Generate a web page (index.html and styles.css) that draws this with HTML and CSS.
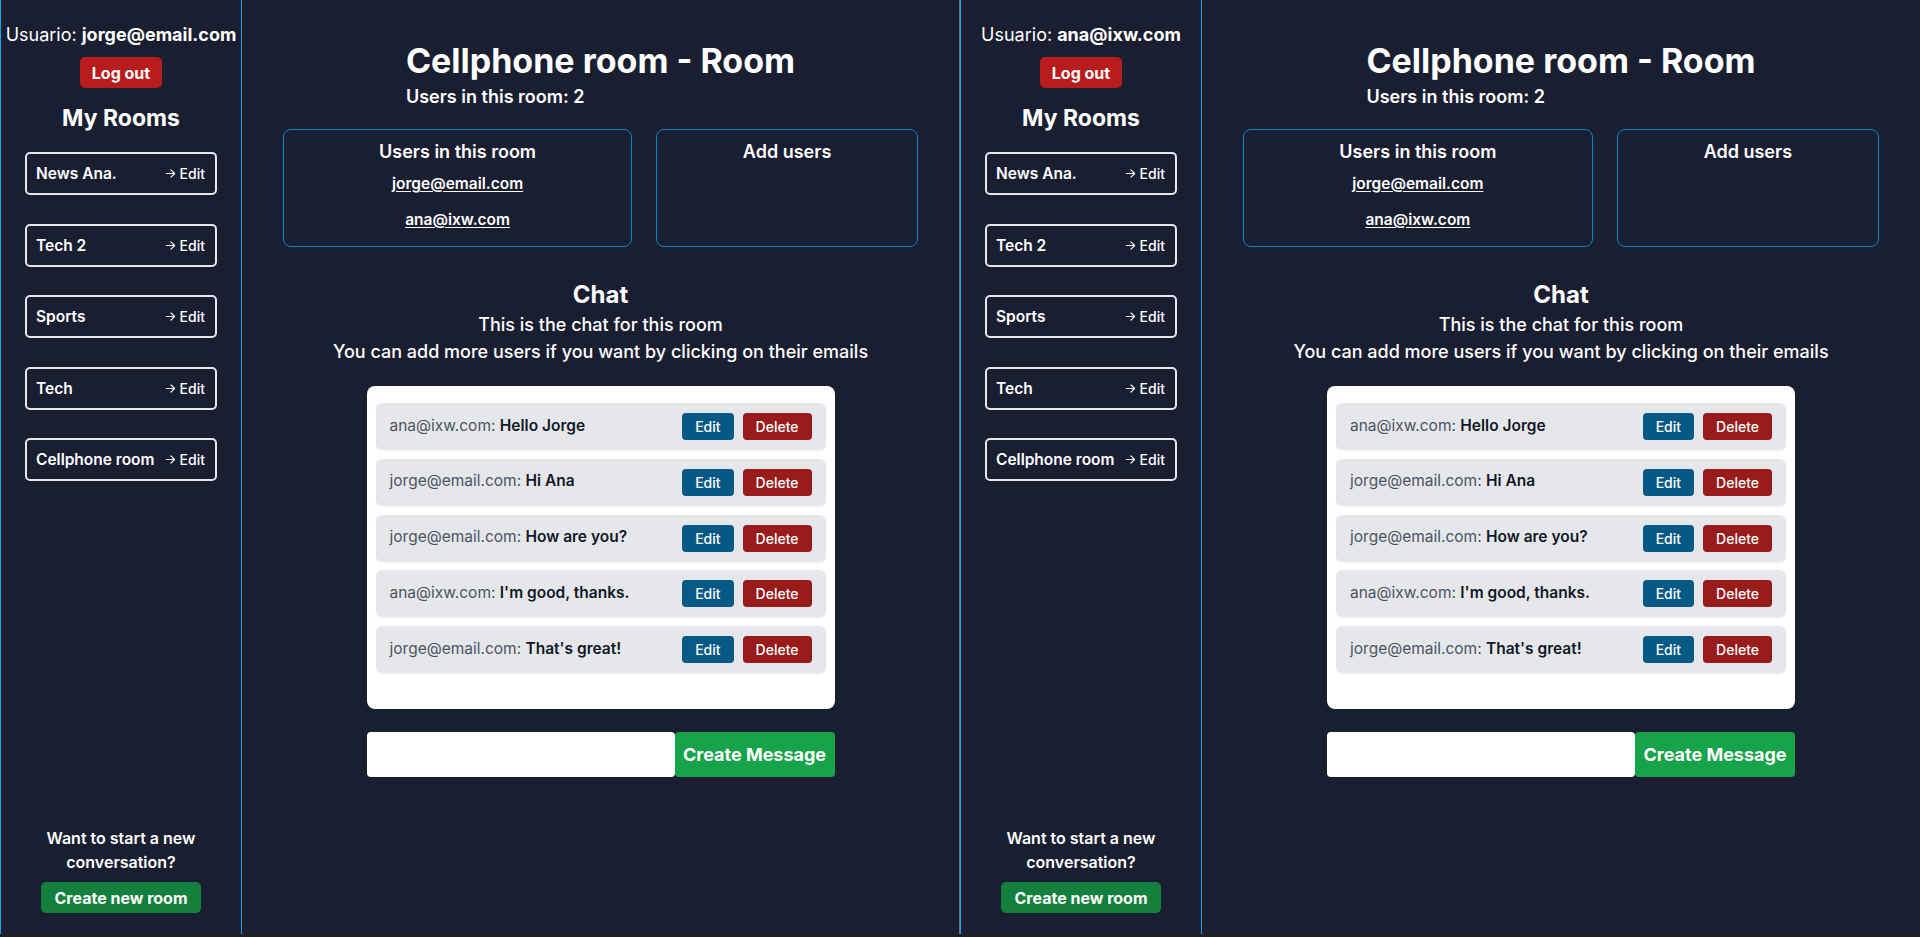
FILE: index.html
```html
<!DOCTYPE html>
<html lang="en">
<head>
<meta charset="utf-8">
<title>Cellphone room - Room</title>
<link rel="stylesheet" href="styles.css">
</head>
<body>
<div class="screen">
  <div class="window window-left">
    <aside class="sidebar">
      <div class="user-line">Usuario: <strong>jorge@email.com</strong></div>
      <button class="btn btn-logout">Log out</button>
      <h2 class="rooms-title">My Rooms</h2>
      <ul class="room-list">
        <li class="room-card"><span class="room-name">News Ana.</span><span class="room-edit"><svg class="arrow" viewBox="0 0 12 12" width="11" height="11"><path d="M1.5 6h9M6.5 2l4 4-4 4" fill="none" stroke="currentColor" stroke-width="1.3" stroke-linecap="round" stroke-linejoin="round"/></svg>Edit</span></li>
        <li class="room-card"><span class="room-name">Tech 2</span><span class="room-edit"><svg class="arrow" viewBox="0 0 12 12" width="11" height="11"><path d="M1.5 6h9M6.5 2l4 4-4 4" fill="none" stroke="currentColor" stroke-width="1.3" stroke-linecap="round" stroke-linejoin="round"/></svg>Edit</span></li>
        <li class="room-card"><span class="room-name">Sports</span><span class="room-edit"><svg class="arrow" viewBox="0 0 12 12" width="11" height="11"><path d="M1.5 6h9M6.5 2l4 4-4 4" fill="none" stroke="currentColor" stroke-width="1.3" stroke-linecap="round" stroke-linejoin="round"/></svg>Edit</span></li>
        <li class="room-card"><span class="room-name">Tech</span><span class="room-edit"><svg class="arrow" viewBox="0 0 12 12" width="11" height="11"><path d="M1.5 6h9M6.5 2l4 4-4 4" fill="none" stroke="currentColor" stroke-width="1.3" stroke-linecap="round" stroke-linejoin="round"/></svg>Edit</span></li>
        <li class="room-card"><span class="room-name">Cellphone room</span><span class="room-edit"><svg class="arrow" viewBox="0 0 12 12" width="11" height="11"><path d="M1.5 6h9M6.5 2l4 4-4 4" fill="none" stroke="currentColor" stroke-width="1.3" stroke-linecap="round" stroke-linejoin="round"/></svg>Edit</span></li>
      </ul>
      <div class="new-room">
        <p>Want to start a new conversation?</p>
        <button class="btn btn-create-room">Create new room</button>
      </div>
    </aside>
    <main class="room-main">
      <header class="room-header">
        <div class="room-header-inner">
          <h1>Cellphone room - Room</h1>
          <p>Users in this room: 2</p>
        </div>
      </header>
      <section class="user-panels">
        <div class="panel">
          <h3>Users in this room</h3>
          <a class="user-link" href="#">jorge@email.com</a>
          <a class="user-link" href="#">ana@ixw.com</a>
        </div>
        <div class="panel">
          <h3>Add users</h3>
        </div>
      </section>
      <section class="chat-intro">
        <h2>Chat</h2>
        <p>This is the chat for this room</p>
        <p>You can add more users if you want by clicking on their emails</p>
      </section>
      <div class="chat-box">
        <div class="msg"><p><span class="author">ana@ixw.com:</span> <b>Hello Jorge</b></p><div class="msg-actions"><button class="btn btn-edit">Edit</button><button class="btn btn-delete">Delete</button></div></div>
        <div class="msg"><p><span class="author">jorge@email.com:</span> <b>Hi Ana</b></p><div class="msg-actions"><button class="btn btn-edit">Edit</button><button class="btn btn-delete">Delete</button></div></div>
        <div class="msg"><p><span class="author">jorge@email.com:</span> <b>How are you?</b></p><div class="msg-actions"><button class="btn btn-edit">Edit</button><button class="btn btn-delete">Delete</button></div></div>
        <div class="msg"><p><span class="author">ana@ixw.com:</span> <b>I'm good, thanks.</b></p><div class="msg-actions"><button class="btn btn-edit">Edit</button><button class="btn btn-delete">Delete</button></div></div>
        <div class="msg"><p><span class="author">jorge@email.com:</span> <b>That's great!</b></p><div class="msg-actions"><button class="btn btn-edit">Edit</button><button class="btn btn-delete">Delete</button></div></div>
      </div>
      <form class="composer">
        <input class="composer-input" type="text">
        <button class="btn btn-send" type="button">Create Message</button>
      </form>
    </main>
  </div>

  <div class="window window-right">
    <aside class="sidebar">
      <div class="user-line">Usuario: <strong>ana@ixw.com</strong></div>
      <button class="btn btn-logout">Log out</button>
      <h2 class="rooms-title">My Rooms</h2>
      <ul class="room-list">
        <li class="room-card"><span class="room-name">News Ana.</span><span class="room-edit"><svg class="arrow" viewBox="0 0 12 12" width="11" height="11"><path d="M1.5 6h9M6.5 2l4 4-4 4" fill="none" stroke="currentColor" stroke-width="1.3" stroke-linecap="round" stroke-linejoin="round"/></svg>Edit</span></li>
        <li class="room-card"><span class="room-name">Tech 2</span><span class="room-edit"><svg class="arrow" viewBox="0 0 12 12" width="11" height="11"><path d="M1.5 6h9M6.5 2l4 4-4 4" fill="none" stroke="currentColor" stroke-width="1.3" stroke-linecap="round" stroke-linejoin="round"/></svg>Edit</span></li>
        <li class="room-card"><span class="room-name">Sports</span><span class="room-edit"><svg class="arrow" viewBox="0 0 12 12" width="11" height="11"><path d="M1.5 6h9M6.5 2l4 4-4 4" fill="none" stroke="currentColor" stroke-width="1.3" stroke-linecap="round" stroke-linejoin="round"/></svg>Edit</span></li>
        <li class="room-card"><span class="room-name">Tech</span><span class="room-edit"><svg class="arrow" viewBox="0 0 12 12" width="11" height="11"><path d="M1.5 6h9M6.5 2l4 4-4 4" fill="none" stroke="currentColor" stroke-width="1.3" stroke-linecap="round" stroke-linejoin="round"/></svg>Edit</span></li>
        <li class="room-card"><span class="room-name">Cellphone room</span><span class="room-edit"><svg class="arrow" viewBox="0 0 12 12" width="11" height="11"><path d="M1.5 6h9M6.5 2l4 4-4 4" fill="none" stroke="currentColor" stroke-width="1.3" stroke-linecap="round" stroke-linejoin="round"/></svg>Edit</span></li>
      </ul>
      <div class="new-room">
        <p>Want to start a new conversation?</p>
        <button class="btn btn-create-room">Create new room</button>
      </div>
    </aside>
    <main class="room-main">
      <header class="room-header">
        <div class="room-header-inner">
          <h1>Cellphone room - Room</h1>
          <p>Users in this room: 2</p>
        </div>
      </header>
      <section class="user-panels">
        <div class="panel">
          <h3>Users in this room</h3>
          <a class="user-link" href="#">jorge@email.com</a>
          <a class="user-link" href="#">ana@ixw.com</a>
        </div>
        <div class="panel">
          <h3>Add users</h3>
        </div>
      </section>
      <section class="chat-intro">
        <h2>Chat</h2>
        <p>This is the chat for this room</p>
        <p>You can add more users if you want by clicking on their emails</p>
      </section>
      <div class="chat-box">
        <div class="msg"><p><span class="author">ana@ixw.com:</span> <b>Hello Jorge</b></p><div class="msg-actions"><button class="btn btn-edit">Edit</button><button class="btn btn-delete">Delete</button></div></div>
        <div class="msg"><p><span class="author">jorge@email.com:</span> <b>Hi Ana</b></p><div class="msg-actions"><button class="btn btn-edit">Edit</button><button class="btn btn-delete">Delete</button></div></div>
        <div class="msg"><p><span class="author">jorge@email.com:</span> <b>How are you?</b></p><div class="msg-actions"><button class="btn btn-edit">Edit</button><button class="btn btn-delete">Delete</button></div></div>
        <div class="msg"><p><span class="author">ana@ixw.com:</span> <b>I'm good, thanks.</b></p><div class="msg-actions"><button class="btn btn-edit">Edit</button><button class="btn btn-delete">Delete</button></div></div>
        <div class="msg"><p><span class="author">jorge@email.com:</span> <b>That's great!</b></p><div class="msg-actions"><button class="btn btn-edit">Edit</button><button class="btn btn-delete">Delete</button></div></div>
      </div>
      <form class="composer">
        <input class="composer-input" type="text">
        <button class="btn btn-send" type="button">Create Message</button>
      </form>
    </main>
  </div>
</div>
</body>
</html>
```

FILE: styles.css
```css
* { box-sizing: border-box; }

html, body {
  margin: 0;
  padding: 0;
}

body {
  background: #1e1f22;
  font-family: Inter, "Noto Sans", "Liberation Sans", sans-serif;
  color: #ffffff;
}

.screen {
  display: flex;
  width: 1920px;
  height: 937px;
  overflow: hidden;
}

.window {
  width: 960px;
  height: 934px;
  display: flex;
  background: #1a1e31;
}

.window-left {
  border-right: 1px solid #6b7280;
}

/* Sidebar */
.sidebar {
  width: 242px;
  flex: none;
  border-left: 1px solid #0ea5e9;
  border-right: 1px solid #0ea5e9;
  display: flex;
  flex-direction: column;
  align-items: center;
  padding: 21px 0 21px;
}

.user-line {
  font-size: 18px;
  line-height: 28px;
  white-space: nowrap;
  text-align: center;
}

.user-line strong {
  font-weight: 700;
}

.btn {
  border: none;
  font-family: inherit;
  color: #ffffff;
  cursor: pointer;
}

.btn-logout {
  margin-top: 8px;
  height: 31px;
  padding: 0 12px;
  background: #b91c1c;
  border-radius: 5px;
  font-size: 16px;
  font-weight: 700;
}

.rooms-title {
  margin: 14px 0 18px;
  font-size: 23px;
  line-height: 32px;
  font-weight: 700;
}

.room-list {
  list-style: none;
  margin: 0;
  padding: 0;
  display: flex;
  flex-direction: column;
  gap: 28.5px;
}

.room-card {
  width: 192px;
  height: 43px;
  border: 2px solid #e5e7eb;
  border-radius: 5px;
  padding: 0 10px 0 9px;
  display: flex;
  align-items: center;
  justify-content: space-between;
}

.room-name {
  font-size: 15.5px;
  font-weight: 600;
}

.room-edit {
  display: flex;
  align-items: center;
  gap: 4px;
  font-size: 14px;
  font-weight: 500;
}

.arrow {
  display: block;
}

.new-room {
  margin-top: auto;
  display: flex;
  flex-direction: column;
  align-items: center;
  width: 200px;
}

.new-room p {
  margin: 0;
  text-align: center;
  font-size: 16px;
  line-height: 24px;
  font-weight: 600;
}

.btn-create-room {
  margin-top: 8px;
  height: 31px;
  padding: 0 14px;
  background: #15803d;
  border-radius: 5px;
  font-size: 16px;
  font-weight: 700;
}

/* Main */
.room-main {
  flex: 1;
  min-width: 0;
  padding: 41px 41px 0;
  display: flex;
  flex-direction: column;
  align-items: stretch;
}

.room-header {
  display: flex;
  justify-content: center;
}

.room-header-inner h1 {
  margin: 0;
  font-size: 34px;
  line-height: 40px;
  font-weight: 700;
}

.room-header-inner p {
  margin: 2px 0 0;
  font-size: 18px;
  line-height: 28px;
  font-weight: 600;
}

.user-panels {
  margin-top: 18px;
  display: grid;
  grid-template-columns: 4fr 3fr;
  gap: 24px;
}

.panel {
  border: 1px solid #0284c7;
  border-radius: 8px;
  padding: 8px;
  min-height: 117px;
  display: flex;
  flex-direction: column;
  align-items: center;
}

.panel h3 {
  margin: 0;
  font-size: 18px;
  line-height: 28px;
  font-weight: 600;
}

.user-link {
  display: block;
  padding: 6px 0;
  color: #ffffff;
  font-size: 15.5px;
  line-height: 24px;
  font-weight: 600;
  text-decoration: underline;
  text-underline-offset: 2px;
}

.chat-intro {
  margin-top: 32px;
  text-align: center;
}

.chat-intro h2 {
  margin: 0;
  font-size: 24px;
  line-height: 32px;
  font-weight: 700;
}

.chat-intro p {
  margin: 0;
  font-size: 18px;
  line-height: 27px;
  font-weight: 500;
}

.chat-box {
  margin: 21px auto 0;
  width: 468px;
  background: #ffffff;
  border-radius: 8px;
  padding: 17px 9px 36px;
  display: flex;
  flex-direction: column;
  gap: 8.75px;
}

.msg {
  height: 47px;
  background: #e5e7eb;
  border-radius: 6px;
  box-shadow: 0 1px 2px rgba(0, 0, 0, 0.06);
  padding: 0 14px;
  display: flex;
  align-items: center;
  justify-content: space-between;
}

.msg p {
  margin: 0 0 2px;
  font-size: 15.5px;
  line-height: 24px;
  color: #111827;
}

.author {
  color: #4b5563;
  font-weight: 400;
}

.msg b {
  font-weight: 600;
}

.msg-actions {
  display: flex;
  gap: 9px;
}

.btn-edit,
.btn-delete {
  height: 27px;
  padding: 0 13px;
  border-radius: 4px;
  font-size: 14px;
  font-weight: 500;
}

.btn-edit {
  background: #075985;
}

.btn-delete {
  background: #991b1b;
}

.composer {
  margin: 23px auto 0;
  width: 468px;
  display: flex;
}

.composer-input {
  flex: 1;
  height: 45px;
  border: none;
  border-radius: 4px;
  background: #ffffff;
  font-family: inherit;
  font-size: 16px;
  padding: 0 10px;
}

.btn-send {
  width: 160px;
  height: 45px;
  background: #16a34a;
  border-radius: 4px;
  font-size: 18px;
  font-weight: 700;
}
```
